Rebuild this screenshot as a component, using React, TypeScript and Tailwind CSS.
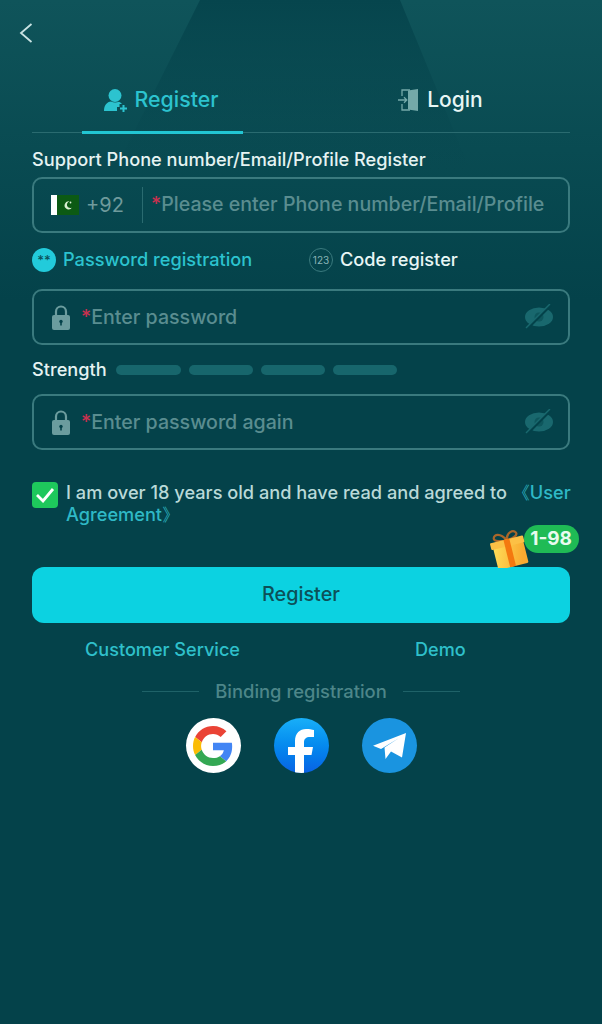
function RegisterIcon() {
  return (
    <svg width="26" height="24" viewBox="0 0 26 24" fill="#2cc3cf">
      <circle cx="12" cy="7.5" r="6.5" />
      <path d="M1 23c0-6 3-9 7-9.500 2.500 1.200 5.500 1.200 8 .2 1.300.5 2.300 1.200 3 2.300h-2.500v3h-2.500v4z" />
      <path d="M19.500 17h2v2.500H24v2h-2.500V24h-2v-2.500H17v-2h2.500z" />
    </svg>
  );
}

function LoginIcon() {
  return (
    <svg width="20" height="24" viewBox="0 0 20 24" fill="none">
      <path d="M10 2.500 20 1v22l-10-1.500z" fill="#74a9a9" />
      <path d="M12 2H4v6M4 16v6h8" stroke="#74a9a9" strokeWidth="1.300" />
      <path d="M0 12h9M6 9.300 8.800 12 6 14.700" stroke="#74a9a9" strokeWidth="1.300" />
    </svg>
  );
}

function Flag() {
  return (
    <div className="flex h-[20px] w-[28px] shrink-0">
      <div className="w-[6px] bg-white" />
      <div className="flex flex-1 items-center justify-center bg-[#0c5a14]">
        <svg width="12" height="12" viewBox="0 0 12 12">
          <path d="M7.500 2.500a4 4 0 1 0 2.500 6 3.300 3.300 0 1 1-2.500-6z" fill="#d9efd2" />
          <circle cx="8.500" cy="3.500" r="0.900" fill="#d9efd2" />
        </svg>
      </div>
    </div>
  );
}

function Lock() {
  return (
    <svg width="20" height="25" viewBox="0 0 20 25" className="shrink-0">
      <path d="M5 11V6.500a5 5 0 0 1 10 0V11" fill="none" stroke="#6b9c9e" strokeWidth="2.200" />
      <rect x="1" y="10" width="18" height="15" rx="2" fill="#6b9c9e" />
      <circle cx="10" cy="16.500" r="1.700" fill="#04424a" />
      <rect x="9.200" y="16.500" width="1.600" height="4" fill="#04424a" />
    </svg>
  );
}

function EyeOff() {
  return (
    <svg width="30" height="26" viewBox="0 0 30 26" className="shrink-0">
      <ellipse cx="15" cy="13" rx="14" ry="9.500" fill="#19686e" />
      <circle cx="15" cy="13" r="4.500" fill="#0e565c" />
      <path d="M3 25 27 1" stroke="#04424a" strokeWidth="2.500" />
      <path d="M2 24 26 0" stroke="#19686e" strokeWidth="1.500" />
    </svg>
  );
}

function PasswordField({ text }: { text: string }) {
  return (
    <div className="flex h-[56px] items-center rounded-[10px] border-2 border-[#3a7a7e] pl-[17px] pr-[14px]">
      <Lock />
      <span className="ml-[10px] flex-1 pt-[2px] text-[19.600px] font-medium text-[#5a8d90]">
        <span className="text-[#c9314f]">*</span>
        {text}
      </span>
      <EyeOff />
    </div>
  );
}

function Gift() {
  return (
    <svg width="40" height="40" viewBox="0 0 40 40">
      <defs>
        <linearGradient id="giftBody" x1="0" y1="0" x2="1" y2="0.300">
          <stop offset="0" stopColor="#ffe05a" />
          <stop offset="1" stopColor="#f9aa30" />
        </linearGradient>
      </defs>
      <g transform="rotate(-14 20 22)">
        <path d="M20 12C16 3 9 3 8 7c-1 3 6 5 12 5zM20 12c2-8 9-9 11-5 1 3-5 5-11 5z" fill="none" stroke="#a8662a" strokeWidth="2.200" />
        <rect x="5" y="12" width="31" height="27" rx="1.500" fill="url(#giftBody)" />
        <rect x="3" y="11" width="34" height="7" rx="1" fill="#fcc045" />
        <rect x="17" y="11" width="6" height="28" fill="#f4780f" />
      </g>
    </svg>
  );
}

function GoogleIcon() {
  return (
    <svg width="40" height="40" viewBox="0 0 48 48">
      <path fill="#EA4335" d="M24 9.500c3.500 0 6.700 1.200 9.200 3.600l6.900-6.900C35.900 2.400 30.500 0 24 0 14.600 0 6.500 5.400 2.600 13.200l8 6.200C12.400 13.700 17.700 9.500 24 9.500z" />
      <path fill="#4285F4" d="M47 24.500c0-1.600-.1-3.100-.4-4.500H24v9h13c-.6 3-2.300 5.500-4.800 7.200l7.700 6C44.400 38 47 31.800 47 24.500z" />
      <path fill="#FBBC05" d="M10.500 28.600c-.5-1.400-.8-3-.8-4.600s.3-3.200.8-4.600l-8-6.200C.9 16.500 0 20.100 0 24s.9 7.500 2.600 10.800z" />
      <path fill="#34A853" d="M24 48c6.500 0 11.900-2.100 15.900-5.800l-7.700-6c-2.100 1.400-4.900 2.300-8.200 2.300-6.300 0-11.600-4.200-13.500-9.900l-8 6.200C6.500 42.600 14.600 48 24 48z" />
    </svg>
  );
}

export default function App() {
  return (
    <div className="relative h-[1024px] w-[602px] overflow-hidden bg-[#04424a] font-['Inter','Liberation_Sans',sans-serif]">
      {/* background shapes behind the header */}
      <div className="absolute inset-x-0 top-0 h-[300px] bg-gradient-to-b from-[#0f545a] to-[#04424a]" />
      <div className="absolute inset-x-0 top-0 h-[170px] bg-gradient-to-b from-[#06454d] to-transparent [clip-path:polygon(200px_0,400px_0,470px_170px,115px_170px)]" />

      <div className="relative flex flex-col px-[32px]">
        <div className="h-[68px] pt-[23px]">
          <svg width="14" height="20" viewBox="0 0 14 20" fill="none" className="-ml-[13px]">
            <path d="M12.500 1 2 10l10.500 9" stroke="#c9e3e3" strokeWidth="1.800" />
          </svg>
        </div>

        {/* tabs */}
        <div className="relative flex h-[65px] border-b border-[#2a6b70]">
          <div className="relative flex w-[269px] items-center justify-center gap-[6px] pb-[1px] pl-[18px] pr-[30px] text-[21.300px] font-medium text-[#2cc3cf]">
            <RegisterIcon />
            Register
            <div className="absolute bottom-[-2px] left-[50px] h-[3px] w-[161px] bg-[#22c6d3]" />
          </div>
          <div className="flex flex-1 items-center justify-center gap-[9px] pb-[1px] pl-[10px] text-[21px] font-medium text-[#e8f6f5]">
            <LoginIcon />
            Login
          </div>
        </div>

        <div className="mt-[15px] text-[18.200px] font-medium leading-[22px] text-[#e5f3f2]">
          Support Phone number/Email/Profile Register
        </div>

        {/* phone input */}
        <div className="mt-[7px] flex h-[56px] items-center rounded-[10px] border-2 border-[#3a7a7e] pl-[17px]">
          <Flag />
          <span className="ml-[7px] w-[56px] text-[20px] text-[#6f9a9c]">+92</span>
          <div className="h-[36px] w-px bg-[#2a6b70]" />
          <span className="ml-[8px] whitespace-nowrap text-[19.600px] font-medium text-[#5a8d90]">
            <span className="text-[#c9314f]">*</span>Please enter Phone number/Email/Profile
          </span>
        </div>

        {/* register mode */}
        <div className="mt-[14px] flex h-[26px] items-center text-[18.200px] font-medium">
          <div className="flex w-[277px] items-center gap-[7px] text-[#2cc3cf]">
            <div className="flex h-[24px] w-[24px] items-center justify-center rounded-full bg-[#22cbdb] text-[13px] leading-[24px] text-[#0b525a]">
              **
            </div>
            Password registration
          </div>
          <div className="flex items-center gap-[7px] text-[#e8f6f5]">
            <div className="flex h-[24px] w-[24px] items-center justify-center rounded-full border border-[#3a7a7e] text-[10px] font-normal text-[#8ab4b5]">
              123
            </div>
            Code register
          </div>
        </div>

        <div className="mt-[16px]">
          <PasswordField text="Enter password" />
        </div>

        {/* strength */}
        <div className="mt-[14px] flex h-[22px] items-center gap-[8px]">
          <span className="mr-[1px] text-[18.200px] font-medium text-[#e5f3f2]">Strength</span>
          <div className="h-[10px] w-[65px] rounded-full bg-[#17666c]" />
          <div className="h-[10px] w-[64px] rounded-full bg-[#17666c]" />
          <div className="h-[10px] w-[64px] rounded-full bg-[#17666c]" />
          <div className="h-[10px] w-[64px] rounded-full bg-[#17666c]" />
        </div>

        <div className="mt-[13px]">
          <PasswordField text="Enter password again" />
        </div>

        {/* agreement */}
        <div className="mt-[32px] flex gap-[8px]">
          <div className="flex h-[26px] w-[26px] shrink-0 items-center justify-center rounded-[4px] bg-[#1ec85c]">
            <svg width="20" height="16" viewBox="0 0 20 16" fill="none">
              <path d="m2 8 6 6L18 2" stroke="white" strokeWidth="2.800" />
            </svg>
          </div>
          <p className="-mr-[6px] -mt-[1px] text-[18.200px] font-medium leading-[22px] text-[#b9d9d8]">
            I am over 18 years old and have read and agreed to <span className="text-[#2fb9c6]">《User</span> <span className="text-[#2fb9c6]">Agreement》</span>
          </p>
        </div>

        {/* register button */}
        <div className="relative mt-[42px] flex h-[56px] items-center justify-center rounded-[12px] bg-[#0cd2e1] text-[19.800px] font-medium text-[#0c5058]">
          Register
          <div className="absolute -top-[42px] right-[-9px] flex h-[28px] items-center rounded-full bg-[#1fbb55] pl-[6px] pr-[7px] text-[19px] font-bold text-[#e8fbef]">
            1-98
          </div>
          <div className="absolute -top-[39px] right-[41px]">
            <Gift />
          </div>
        </div>

        <div className="mt-[15px] flex text-[18.100px] font-medium leading-[22px] text-[#2fc0cb]">
          <span className="ml-[53px]">Customer Service</span>
          <span className="ml-[175px]">Demo</span>
        </div>

        {/* binding */}
        <div className="mt-[19px] flex items-center justify-center gap-[16px] text-[18.400px] font-medium leading-[24px] text-[#4d8689]">
          <div className="h-px w-[57px] bg-[#1f6268]" />
          Binding registration
          <div className="h-px w-[57px] bg-[#1f6268]" />
        </div>

        <div className="mt-[15px] flex justify-center gap-[33px]">
          <div className="flex h-[55px] w-[55px] items-center justify-center rounded-full bg-white">
            <GoogleIcon />
          </div>
          <div className="flex h-[55px] w-[55px] items-end justify-center overflow-hidden rounded-full bg-gradient-to-b from-[#19aff8] to-[#0b62e4]">
            <svg width="28" height="45" viewBox="0 0 28 45">
              <path d="M8 45V27H1v-8h7v-6C8 5 13 1 19 1c3 0 6 .5 8 1v7h-4c-4 0-6 2-6 5v5h9l-1.500 8H17v18z" fill="white" />
            </svg>
          </div>
          <div className="flex h-[55px] w-[55px] items-center justify-center rounded-full bg-[#1a94e0]">
            <svg width="33" height="26" viewBox="0 0 33 26">
              <path d="M0 12.700 33 0 29 24.500 18 18.500 12.500 26 11.500 14.500 26 5 8 16z" fill="white" />
            </svg>
          </div>
        </div>
      </div>
    </div>
  );
}
